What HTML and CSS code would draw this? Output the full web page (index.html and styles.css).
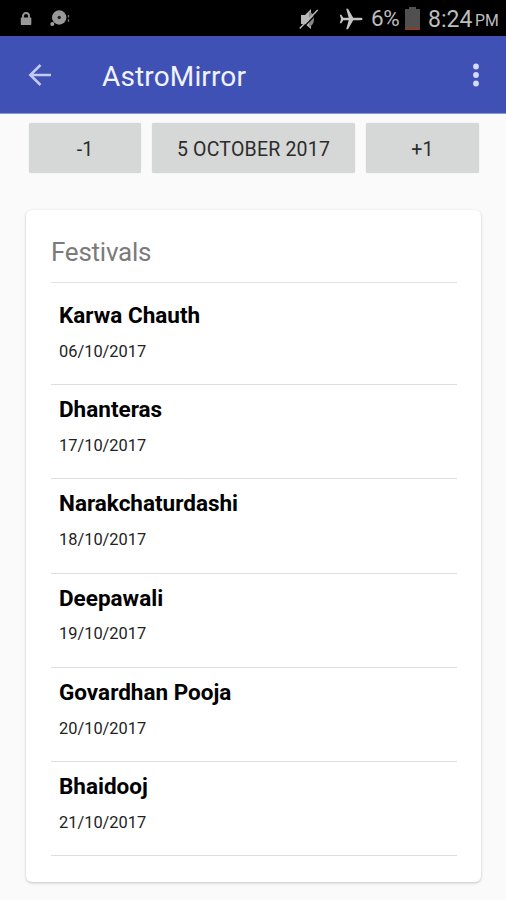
FILE: index.html
```html
<!DOCTYPE html>
<html lang="en">
<head>
<meta charset="utf-8">
<title>AstroMirror</title>
<link rel="stylesheet" href="styles.css">
</head>
<body>
<div class="status">
  <svg class="lock" viewBox="0 0 12 14"><rect x=".8" y="5.500" width="10.500" height="7.500" rx=".8" fill="#999"/><path d="M3 7V4a3 3 0 0 1 6 0v3" fill="none" stroke="#999" stroke-width="1.900"/></svg>
  <svg class="disc" viewBox="0 0 20 17"><circle cx="9.200" cy="7.500" r="7.200" fill="#999"/><circle cx="9.200" cy="7.500" r="1.700" fill="#222"/><circle cx="2.300" cy="14" r="2" fill="#a2a2a2"/><path d="M18.500 5v2.500M18.500 9.200v2.500" stroke="#777" stroke-width="1.300"/></svg>
  <span class="spacer"></span>
  <svg class="mute" viewBox="0 0 20 22"><path d="M2 7h4l6-6v20l-6-5H2z" fill="#b8b8b8"/><path d="M10 4q5 1 5 7t-5 8z" fill="#888"/><path d="M2.200 21.500 20.200 3.500" stroke="#000" stroke-width="1.200"/><path d="M.7 20.500 18.700 2" stroke="#b8b8b8" stroke-width="1.500"/></svg>
  <svg class="plane" viewBox="0 0 24 22"><path d="M23.500 11c0-.8-.8-1.200-2-1.200h-7.300L9 .8H7.200l2.500 9H4.300L2.300 6.700H.8L2 11 .8 15.300h1.500l2-3.100h5.400l-2.500 9H9l5.200-9h7.300c1.200 0 2-.4 2-1.200z" fill="#c4c4c4"/></svg>
  <span class="battery-text">6%</span>
  <svg class="battery" viewBox="0 0 15 23"><path d="M0 2h4V0h7v2h4v21H0z" fill="#505050"/><path d="M0 20.500h15V23H0z" fill="#883e2a"/></svg>
  <span class="time">8:24</span><span class="pm">PM</span>
</div>
<header class="appbar">
  <svg class="back" viewBox="0 0 24 24"><path d="M23 12H2.500M12.500 2 2.300 12l10.200 10" fill="none" stroke="#c5cbee" stroke-width="2.500"/></svg>
  <h1>AstroMirror</h1>
  <svg class="more" viewBox="0 0 8 24"><g fill="#d5daf7"><circle cx="4" cy="3.500" r="2.900"/><circle cx="4" cy="12" r="2.900"/><circle cx="4" cy="20.500" r="2.900"/></g></svg>
</header>
<main>
  <div class="dates">
    <button>-1</button><button>5 OCTOBER 2017</button><button>+1</button>
  </div>
  <section class="card">
    <h2>Festivals</h2>
    <ul>
      <li><h3>Karwa Chauth</h3><p>06/10/2017</p></li>
      <li><h3>Dhanteras</h3><p>17/10/2017</p></li>
      <li><h3>Narakchaturdashi</h3><p>18/10/2017</p></li>
      <li><h3>Deepawali</h3><p>19/10/2017</p></li>
      <li><h3>Govardhan Pooja</h3><p>20/10/2017</p></li>
      <li><h3>Bhaidooj</h3><p>21/10/2017</p></li>
    </ul>
  </section>
</main>
</body>
</html>
```
FILE: styles.css
```css
* { box-sizing: border-box; }
body { margin: 0; height: 900px; overflow: hidden; background: #fafafa; font-family: Roboto, "Liberation Sans", sans-serif; color: #0a0a0a; }
h1, h2, h3, p, ul { margin: 0; padding: 0; font-weight: 400; }
svg { flex: none; display: block; }
.status { height: 36px; background: #000; display: flex; align-items: center; color: #bdbdbd; padding: 1px 8px 0 20px; white-space: nowrap; }
.lock { width: 12px; height: 14px; }
.disc { width: 20px; height: 17px; margin-left: 18px; }
.spacer { flex: 1; }
.mute { width: 20px; height: 22px; margin-right: 20px; position: relative; left: -1px; }
.plane { width: 24px; height: 22px; margin-right: 7px; position: relative; left: -1px; }
.battery-text { width: 29px; font-size: 22.500px; line-height: 35px; letter-spacing: -.3px; }
.battery { width: 15px; height: 23px; margin: 0 9px 0 5px; }
.time { width: 46px; font-size: 23px; line-height: 35px; padding-top: 1px; margin-left: -1px; }
.pm { width: 24px; font-size: 15.800px; line-height: 35px; padding: 4px 0 0 1px; }
.appbar { height: 78px; background: #3f51b5; border-bottom: 1px solid #8b95d2; display: flex; align-items: center; padding: 0 26px 0 28px; }
.back { width: 24px; height: 24px; }
.appbar h1 { flex: 1; margin-left: 50px; padding-top: 4px; font-size: 28px; line-height: 37px; letter-spacing: .15px; color: #f0f2ff; }
.more { width: 8px; height: 24px; }
.dates { display: grid; grid-template-columns: 112px 203px 113px; gap: 11px; padding: 9px 0 0 29px; }
.dates button { height: 50px; padding: 2px 0 0; border: 0; border-radius: 2px; background: #d6d7d7; color: #2c2c2c; font: 400 19.500px Roboto, "Liberation Sans", sans-serif; letter-spacing: .2px; box-shadow: 0 0 1px #c8c8c8; white-space: nowrap; }
.card { margin: 37px 25px 0 26px; height: 672px; padding: 0 24px 0 25px; background: #fff; border-radius: 6px; box-shadow: 0 1px 3px rgba(0,0,0,.22); }
.card h2 { height: 73px; padding-top: 26px; border-bottom: 1px solid #e3e3e3; font-size: 26px; line-height: 32px; letter-spacing: -.25px; color: #7b7b7b; }
.card ul { list-style: none; padding-top: 8px; }
.card li { height: 94.200px; padding: 10px 8px 0; border-bottom: 1.500px solid #dedede; }
.card h3 { font-size: 22.500px; line-height: 28px; font-weight: 700; color: #000; }
.card p { margin-top: 10.900px; font-size: 16.400px; line-height: 24px; color: #222; }
```
